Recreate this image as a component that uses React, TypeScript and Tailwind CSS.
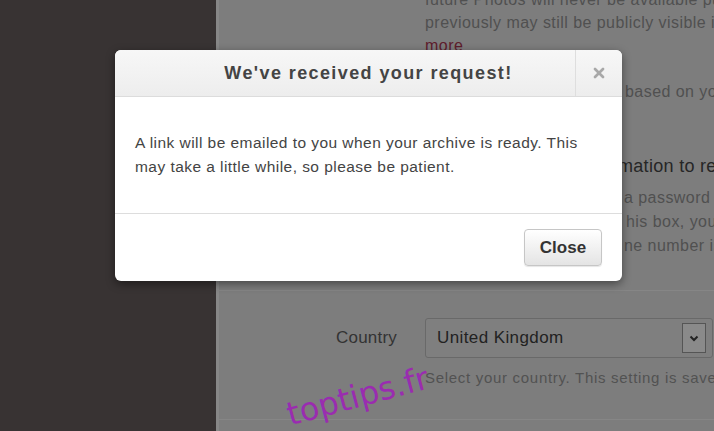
import { X } from "lucide-react";

const font = { fontFamily: '"Liberation Sans", Arial, sans-serif' };

export default function App() {
  return (
    <div
      className="relative w-[714px] h-[431px] overflow-hidden flex bg-[#7f7f7f]"
      style={font}
    >
      {/* sidebar (dimmed) */}
      <div className="w-[216px] shrink-0 bg-[#383333]" />

      {/* settings pane, dimmed behind the dialog */}
      <div className="flex-1 bg-[#7d7d7d] border-l-[3px] border-[#878787] overflow-hidden">
        <div className="-mt-[12px] border-b border-[#868686] pb-[32px]">
          <div className="pl-[206px] text-[16px] tracking-[0.45px] text-[#505050] whitespace-nowrap">
            <div className="h-[23px] leading-[23px]">
              future Photos will never be available publicly, but
            </div>
            <div className="h-[23px] leading-[23px]">
              previously may still be publicly visible in search
            </div>
            <div className="h-[23px] leading-[23px] text-[#5e1c2c]">more</div>
            <div className="mt-[23px] h-[23px] leading-[23px]">
              <span className="inline-block w-[200px]">Show ads</span>based on your activity
            </div>
            <div className="mt-[51px] h-[24px] leading-[24px] text-[18px] tracking-[0.3px] text-[#262626]">
              <span className="inline-block w-[193px]">Use your phone infor</span>mation to recover
            </div>
            <div className="mt-[8px] h-[24px] leading-[24px]">
              <span className="inline-block w-[199px]">If you forget</span>a password
            </div>
            <div className="h-[24px] leading-[24px]">
              <span className="inline-block w-[201px]">If you check t</span>his box, you
            </div>
            <div className="h-[24px] leading-[24px]">
              <span className="inline-block w-[199px]">to confirm your pho</span>ne number is
            </div>
          </div>
        </div>

        <div className="pt-[27px] pb-[30px] border-b border-[#868686]">
          <div className="flex items-center">
            <div className="w-[178px] text-right text-[17px] tracking-[0.2px] text-[#333333]">Country</div>
            <div className="ml-[28px] w-[288px] h-[40px] border border-[#696969] rounded-[3px] bg-[#7f7f7f] flex items-center justify-between pl-[11px] pr-[6px]">
              <span className="text-[17px] tracking-[0.4px] text-[#222222]">United Kingdom</span>
              <span className="w-[24px] h-[30px] border border-[#555555] bg-[#8a8a8a] flex items-center justify-center">
                <svg width="10" height="7" viewBox="0 0 10 7">
                  <path d="M1.5 1.5 L5 5 L8.5 1.5" fill="none" stroke="#222" strokeWidth="2" />
                </svg>
              </span>
            </div>
          </div>
          <div className="ml-[206px] mt-[9px] h-[22px] leading-[22px] text-[15px] tracking-[0.7px] text-[#525252] whitespace-nowrap">
            Select your country. This setting is saved to your account.
          </div>
        </div>
      </div>

      {/* modal */}
      <div className="absolute left-[115px] top-[50px] w-[507px] rounded-[6px] bg-white shadow-[0_3px_10px_rgba(0,0,0,0.45)] overflow-hidden">
        <div className="relative h-[47px] flex items-center justify-center bg-gradient-to-b from-[#f7f7f7] to-[#ededed] border-b border-[#dcdcdc]">
          <h3 className="text-[18px] font-bold text-[#444444] tracking-[1.4px]">
            We've received your request!
          </h3>
          <button className="absolute right-0 top-0 w-[47px] h-[46px] border-l border-[#dedede] flex items-center justify-center text-[#a8a8a8]">
            <X size={16} strokeWidth={4} />
          </button>
        </div>
        <div className="px-[20px] py-[34px] text-[15.5px] leading-[24px] tracking-[0.45px] text-[#444444]">
          A link will be emailed to you when your archive is ready. This may take a little while, so please be patient.
        </div>
        <div className="border-t border-[#dddddd] flex justify-end pt-[15px] pb-[15px] pr-[20px]">
          <button className="w-[78px] h-[37px] rounded-[4px] border border-[#c6c6c6] bg-gradient-to-b from-white to-[#e4e4e4] text-[17px] font-bold text-[#333333] shadow-[0_1px_1px_rgba(0,0,0,0.1)]">
            Close
          </button>
        </div>
      </div>

      {/* watermark */}
      <div
        className="absolute left-[285px] top-[380px] -rotate-[15deg] text-[32px] leading-none text-[#9a2cb0]"
        style={{ fontFamily: '"DejaVu Sans", Verdana, sans-serif' }}
      >
        toptips.fr
      </div>
    </div>
  );
}
